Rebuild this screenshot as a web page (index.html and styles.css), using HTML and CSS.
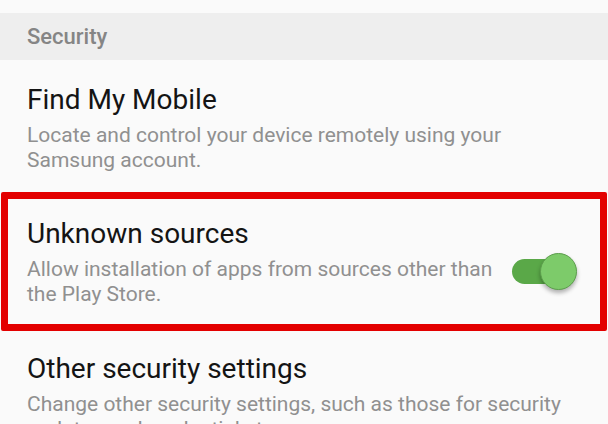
FILE: index.html
```html
<!DOCTYPE html>
<html lang="en">
  <head>
    <meta charset="UTF-8" />
    <meta name="viewport" content="width=device-width, initial-scale=1" />
    <title>Security</title>
    <link rel="stylesheet" href="styles.css">
  </head>
  <body>
    <div class="topGap"></div>
    <div class="sectionHeader">Security</div>

    <div class="item first">
      <div class="itemText">
        <div class="itemTitle">Find My Mobile</div>
        <div class="itemSub">Locate and control your device remotely using your Samsung account.</div>
      </div>
    </div>

    <div class="item marked">
      <div class="itemText">
        <div class="itemTitle">Unknown sources</div>
        <div class="itemSub">Allow installation of apps from sources other than the Play Store.</div>
      </div>
      <div class="toggle on">
        <div class="track"></div>
        <div class="knob"></div>
      </div>
    </div>

    <div class="item last">
      <div class="itemText">
        <div class="itemTitle">Other security settings</div>
        <div class="itemSub">Change other security settings, such as those for security updates and credential storage.</div>
      </div>
    </div>
  </body>
</html>
```

FILE: styles.css
```css
body {
  margin: 0;
  padding: 0;
  background: #fafafa;
  font-family: Roboto, "Liberation Sans", sans-serif;
  width: 608px;
  height: 424px;
  overflow: hidden;
}
.topGap {
  height: 13px;
}
.sectionHeader {
  height: 47px;
  background: #eeeeee;
  padding-left: 27px;
  display: flex;
  align-items: center;
  font-size: 22px;
  font-weight: 500;
  color: #858585;
}
.item {
  display: flex;
  align-items: flex-start;
  padding-left: 27px;
  padding-right: 24px;
  box-sizing: border-box;
}
.item.first {
  height: 132px;
  padding-top: 24px;
}
/* red highlight round the unknown sources row */
.item.marked {
  height: 139px;
  margin: 0 1px;
  border: 7px solid #e30000;
  border-radius: 2px;
  padding-top: 19px;
  padding-left: 19px;
  padding-right: 23px;
}
.item.last {
  padding-top: 22px;
}
.itemText {
  flex: 1;
}
.itemTitle {
  font-size: 28px;
  line-height: 32px;
  color: #141414;
}
.itemSub {
  margin-top: 7px;
  font-size: 21px;
  line-height: 25px;
  color: #909090;
}
.toggle {
  position: relative;
  align-self: center;
  width: 65px;
  height: 37px;
  margin-left: 6px;
  flex-shrink: 0;
}
.track {
  position: absolute;
  left: 0;
  top: 6px;
  width: 50px;
  height: 25px;
  border-radius: 13px;
  background: #5aa848;
}
.knob {
  position: absolute;
  right: 0;
  top: 0;
  width: 37px;
  height: 37px;
  box-sizing: border-box;
  border-radius: 50%;
  background: #7dcb6a;
  border: 1px solid #5c9e4c;
  box-shadow: 0 3px 4px rgba(0, 0, 0, 0.3);
}
```
